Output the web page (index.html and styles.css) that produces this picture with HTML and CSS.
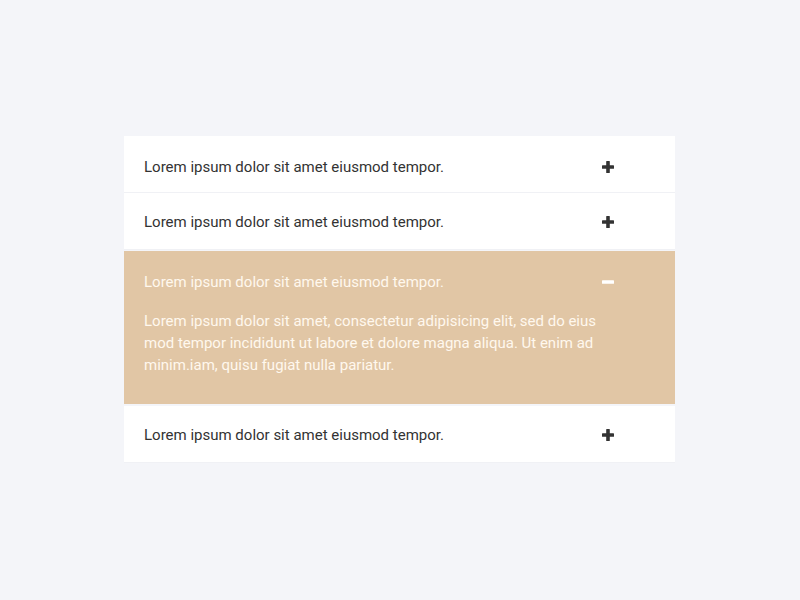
FILE: index.html
```html
<!DOCTYPE html>
<html lang="en">
<head>
<meta charset="utf-8">
<title>Accordion</title>
<link rel="stylesheet" href="styles.css">
</head>
<body>
<div class="accordion">
  <div class="item first">
    <div class="head">
      <span class="title">Lorem ipsum dolor sit amet eiusmod tempor.</span>
      <svg class="icon" width="12" height="12" viewBox="0 0 12 12"><rect x="4.2" y="0" width="3.6" height="12" rx="0.6" fill="#333"/><rect x="0" y="4.2" width="12" height="3.6" rx="0.6" fill="#333"/></svg>
    </div>
  </div>
  <div class="item">
    <div class="head">
      <span class="title">Lorem ipsum dolor sit amet eiusmod tempor.</span>
      <svg class="icon" width="12" height="12" viewBox="0 0 12 12"><rect x="4.2" y="0" width="3.6" height="12" rx="0.6" fill="#333"/><rect x="0" y="4.2" width="12" height="3.6" rx="0.6" fill="#333"/></svg>
    </div>
  </div>
  <div class="item active">
    <div class="head">
      <span class="title">Lorem ipsum dolor sit amet eiusmod tempor.</span>
      <svg class="icon" width="12" height="12" viewBox="0 0 12 12"><rect x="0" y="4.2" width="12" height="3.6" rx="0.6" fill="#fff"/></svg>
    </div>
    <div class="body">Lorem ipsum dolor sit amet, consectetur adipisicing elit, sed do eius mod tempor incididunt ut labore et dolore magna aliqua. Ut enim ad minim.iam, quisu fugiat nulla pariatur.</div>
  </div>
  <div class="item">
    <div class="head">
      <span class="title">Lorem ipsum dolor sit amet eiusmod tempor.</span>
      <svg class="icon" width="12" height="12" viewBox="0 0 12 12"><rect x="4.2" y="0" width="3.6" height="12" rx="0.6" fill="#333"/><rect x="0" y="4.2" width="12" height="3.6" rx="0.6" fill="#333"/></svg>
    </div>
  </div>
</div>
</body>
</html>
```
FILE: styles.css
```css
html, body {
  margin: 0;
  padding: 0;
}
body {
  background: #f4f5f9;
  font-family: Roboto, "Liberation Sans", sans-serif;
  font-size: 15px;
  color: #333;
  padding-top: 136px;
}
.accordion {
  width: 551px;
  margin-left: 124px;
}
.item {
  background: #fff;
  border-bottom: 1px solid #f0f1f5;
}
.head {
  display: flex;
  align-items: center;
  justify-content: space-between;
  height: 56px;
  box-sizing: border-box;
  padding: 2px 61px 0 20px;
  line-height: 22px;
}
.item.first .head {
  padding-top: 6px;
}
.icon {
  display: block;
  flex: none;
}
.item.active {
  background: #e1c6a5;
  color: #fff8ee;
  border-bottom: none;
  margin: 1px 0 2px;
  padding-bottom: 28px;
}
.item.active .head {
  height: auto;
  padding-top: 20px;
}
.body {
  margin-top: 17px;
  padding: 0 61px 0 20px;
  line-height: 22px;
}
```
